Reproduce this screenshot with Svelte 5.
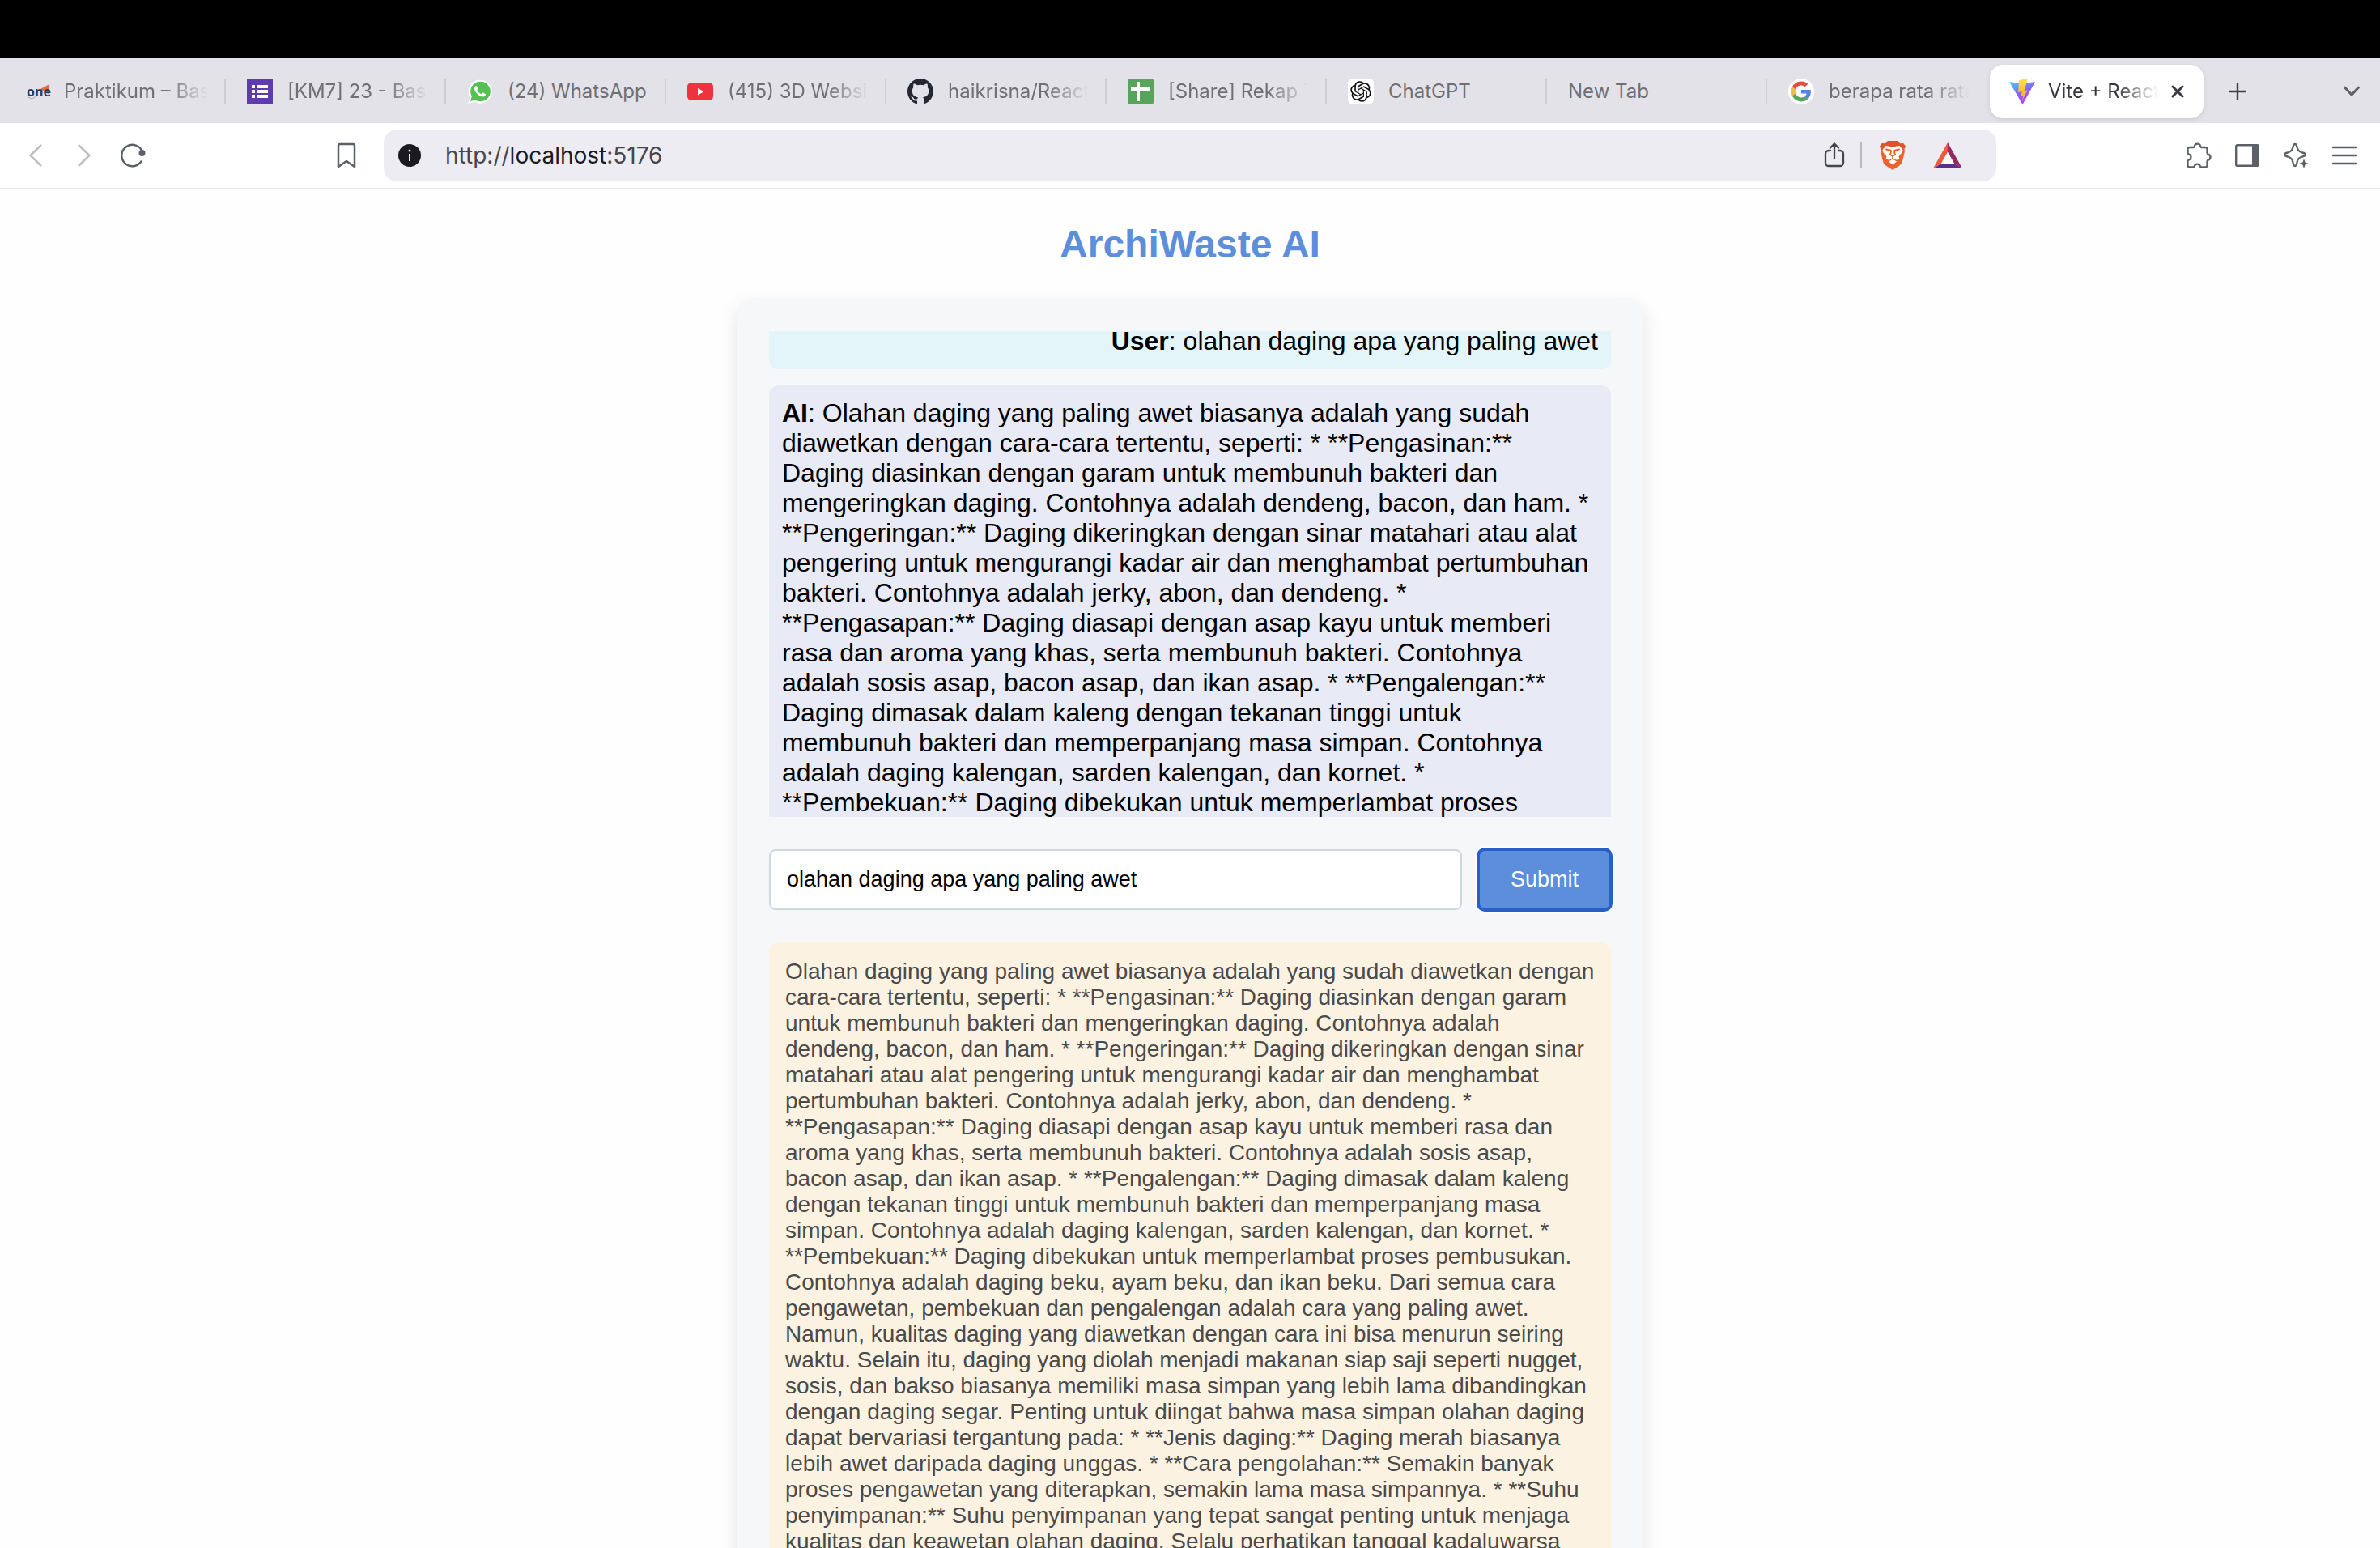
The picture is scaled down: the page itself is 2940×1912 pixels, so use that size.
<script>
  import { onMount } from 'svelte';

  const tabs = [
    { title: 'Praktikum – Basis Data', icon: 'one', long: true },
    { title: '[KM7] 23 - Basis Data', icon: 'forms', long: true },
    { title: '(24) WhatsApp', icon: 'whatsapp' },
    { title: '(415) 3D Website', icon: 'youtube', long: true },
    { title: 'haikrisna/React-App', icon: 'github', long: true },
    { title: '[Share] Rekap Tugas', icon: 'sheets', long: true },
    { title: 'ChatGPT', icon: 'openai' },
    { title: 'New Tab', icon: null },
    { title: 'berapa rata rata', icon: 'google', long: true }
  ];

  const answer =
    'Olahan daging yang paling awet biasanya adalah yang sudah diawetkan dengan cara-cara tertentu, seperti: * **Pengasinan:** Daging diasinkan dengan garam untuk membunuh bakteri dan mengeringkan daging. Contohnya adalah dendeng, bacon, dan ham. * **Pengeringan:** Daging dikeringkan dengan sinar matahari atau alat pengering untuk mengurangi kadar air dan menghambat pertumbuhan bakteri. Contohnya adalah jerky, abon, dan dendeng. * **Pengasapan:** Daging diasapi dengan asap kayu untuk memberi rasa dan aroma yang khas, serta membunuh bakteri. Contohnya adalah sosis asap, bacon asap, dan ikan asap. * **Pengalengan:** Daging dimasak dalam kaleng dengan tekanan tinggi untuk membunuh bakteri dan memperpanjang masa simpan. Contohnya adalah daging kalengan, sarden kalengan, dan kornet. * **Pembekuan:** Daging dibekukan untuk memperlambat proses pembusukan. Contohnya adalah daging beku, ayam beku, dan ikan beku. Dari semua cara pengawetan, pembekuan dan pengalengan adalah cara yang paling awet. Namun, kualitas daging yang diawetkan dengan cara ini bisa menurun seiring waktu. Selain itu, daging yang diolah menjadi makanan siap saji seperti nugget, sosis, dan bakso biasanya memiliki masa simpan yang lebih lama dibandingkan dengan daging segar. Penting untuk diingat bahwa masa simpan olahan daging dapat bervariasi tergantung pada: * **Jenis daging:** Daging merah biasanya lebih awet daripada daging unggas. * **Cara pengolahan:** Semakin banyak proses pengawetan yang diterapkan, semakin lama masa simpannya. * **Suhu penyimpanan:** Suhu penyimpanan yang tepat sangat penting untuk menjaga kualitas dan keawetan olahan daging. Selalu perhatikan tanggal kadaluwarsa';

  let question = $state('olahan daging apa yang paling awet');
  let history;

  onMount(() => {
    history.scrollTop = 22;
  });
</script>

{#snippet favicon(name)}
  {#if name === 'one'}
    <span class="one" aria-hidden="true">
      <svg class="one-mark" viewBox="0 0 28 32"><path d="M28 7v13L17 13z" fill="#e2683f" /><path d="M2 23c4 2.500 7 2 9-1" stroke="#9aa3b5" fill="none" /></svg>
      <b>one</b>
    </span>
  {:else if name === 'forms'}
    <svg class="fav" viewBox="0 0 32 32"><rect width="32" height="32" rx="1" fill="#5f3bb0" /><g fill="#fff"><path d="M6 8h4v4H6zM6 14h4v4H6zM6 20h4v4H6zM12 8h14v4H12zM12 14h14v4H12zM12 20h14v4H12z" /></g></svg>
  {:else if name === 'whatsapp'}
    <svg class="fav" viewBox="0 0 32 32"><path d="M1 31l2.300-8A14.500 14.500 0 1 1 9 28.800z" fill="#fff" /><path d="M4 28l1.800-6A12.300 12.300 0 1 1 10 26.400z" fill="#57c052" /><path d="M11.500 9c-1 0-2.500 1.300-2.500 3.300 0 4.500 6.500 10.200 10.500 10.200 2 0 3.500-1.300 3.600-3.300l-3.800-2-1.800 2c-2.600-1-4.300-2.800-5.300-5l1.400-1.700z" fill="#fff" /></svg>
  {:else if name === 'youtube'}
    <svg class="fav" viewBox="0 0 32 32"><rect y="5" width="32" height="22" rx="5" fill="#ee3340" /><path d="M13 12v8.500l7.500-4.250z" fill="#fff" /></svg>
  {:else if name === 'github'}
    <svg class="fav" viewBox="0 0 16 16"><path fill="#24292f" d="M8 0C3.580 0 0 3.580 0 8c0 3.540 2.290 6.530 5.470 7.590.4.070.55-.17.55-.38 0-.19-.01-.82-.01-1.490-2.010.37-2.530-.49-2.690-.94-.09-.23-.48-.94-.82-1.130-.28-.15-.68-.52-.01-.53.63-.01 1.080.58 1.230.82.72 1.210 1.870.87 2.330.66.07-.52.28-.87.51-1.070-1.780-.2-3.640-.89-3.640-3.950 0-.87.31-1.590.82-2.150-.08-.2-.36-1.020.08-2.120 0 0 .67-.21 2.200.82.64-.18 1.320-.27 2-.27s1.360.09 2 .27c1.530-1.040 2.200-.82 2.200-.82.44 1.100.16 1.920.08 2.120.51.56.82 1.270.82 2.150 0 3.070-1.870 3.750-3.650 3.950.29.25.54.73.54 1.480 0 1.070-.01 1.930-.01 2.200 0 .21.15.46.55.38A8.010 8.010 0 0 0 16 8c0-4.420-3.580-8-8-8z" /></svg>
  {:else if name === 'sheets'}
    <svg class="fav" viewBox="0 0 32 32"><rect width="32" height="32" rx="3" fill="#57a55a" /><path d="M4 11h7V4h4v7h13v4H15v13h-4V15H4z" fill="#fff" /></svg>
  {:else if name === 'openai'}
    <svg class="fav" viewBox="-3 -3 30 30"><rect x="-3" y="-3" width="30" height="30" rx="6" fill="#fff" /><path fill="#111" d="M22.282 9.821a5.985 5.985 0 0 0-.516-4.910 6.046 6.046 0 0 0-6.510-2.900A6.065 6.065 0 0 0 4.981 4.182a5.985 5.985 0 0 0-3.998 2.900 6.046 6.046 0 0 0 .743 7.097 5.980 5.980 0 0 0 .510 4.911 6.051 6.051 0 0 0 6.515 2.900A5.985 5.985 0 0 0 13.260 24a6.056 6.056 0 0 0 5.772-4.206 5.990 5.990 0 0 0 3.998-2.900 6.056 6.056 0 0 0-.747-7.073zM13.260 22.430a4.476 4.476 0 0 1-2.876-1.040l.141-.081 4.779-2.758a.795.795 0 0 0 .393-.681v-6.737l2.020 1.169a.071.071 0 0 1 .038.052v5.583a4.504 4.504 0 0 1-4.495 4.494zM3.600 18.304a4.471 4.471 0 0 1-.535-3.014l.142.085 4.783 2.759a.771.771 0 0 0 .780 0l5.843-3.369v2.332a.080.080 0 0 1-.033.062L9.740 19.950a4.500 4.500 0 0 1-6.140-1.646zM2.340 7.896a4.485 4.485 0 0 1 2.366-1.973V11.600a.766.766 0 0 0 .388.676l5.815 3.355-2.020 1.168a.076.076 0 0 1-.071 0l-4.830-2.786A4.504 4.504 0 0 1 2.340 7.872zm16.597 3.855l-5.833-3.387L15.119 7.200a.076.076 0 0 1 .071 0l4.830 2.791a4.494 4.494 0 0 1-.676 8.105v-5.678a.790.790 0 0 0-.407-.667zm2.010-3.023l-.141-.085-4.774-2.782a.776.776 0 0 0-.785 0L9.409 9.230V6.897a.066.066 0 0 1 .028-.061l4.830-2.787a4.500 4.500 0 0 1 6.680 4.660zm-12.640 4.135l-2.020-1.164a.080.080 0 0 1-.038-.057V6.075a4.500 4.500 0 0 1 7.375-3.453l-.142.080L8.704 5.460a.795.795 0 0 0-.393.681zm1.097-2.365l2.602-1.500 2.607 1.500v2.999l-2.597 1.500-2.607-1.500z" /></svg>
  {:else if name === 'google'}
    <svg class="fav" viewBox="-7 -7 62 62"><circle cx="24" cy="24" r="31" fill="#fff" /><path fill="#dc5143" d="M24 9.500c3.540 0 6.710 1.220 9.210 3.600l6.850-6.850C35.900 2.380 30.470 0 24 0 14.620 0 6.510 5.380 2.560 13.220l7.980 6.190C12.430 13.720 17.740 9.500 24 9.500z" /><path fill="#4f86ec" d="M46.980 24.550c0-1.570-.15-3.090-.38-4.550H24v9.020h12.940c-.58 2.960-2.260 5.480-4.780 7.180l7.730 6c4.510-4.180 7.090-10.360 7.090-17.650z" /><path fill="#f2be42" d="M10.530 28.590a14.500 14.500 0 0 1 0-9.180l-7.980-6.190a24 24 0 0 0 0 21.560l7.980-6.190z" /><path fill="#58a55c" d="M24 48c6.480 0 11.930-2.130 15.890-5.810l-7.730-6c-2.150 1.450-4.920 2.300-8.160 2.300-6.260 0-11.570-4.220-13.470-9.910l-7.980 6.190C6.510 42.620 14.620 48 24 48z" /></svg>
  {/if}
{/snippet}

<div class="window">
  <div class="notch"></div>

  <nav class="tabbar" aria-label="Tabs">
    {#each tabs as tab}
      <button class="tab">
        {@render favicon(tab.icon)}
        <span class="title" class:faded={tab.long}>{tab.title}</span>
      </button>
    {/each}
    <div class="tab active">
      <svg class="fav" viewBox="0 0 32 32">
        <defs>
          <linearGradient id="shield" x1="0" y1="0" x2="0.600" y2="1"><stop offset="0" stop-color="#41d1ff" /><stop offset="0.600" stop-color="#8f5cff" /><stop offset="1" stop-color="#bd34fe" /></linearGradient>
          <linearGradient id="bolt" x1="0.500" y1="0" x2="0.500" y2="1"><stop offset="0" stop-color="#ffe24f" /><stop offset="1" stop-color="#f6a02c" /></linearGradient>
        </defs>
        <path d="M0 4l16 2.500L32 4 16.500 32z" fill="url(#shield)" />
        <path d="M23 0L12 2l-.8 15 4.500-1-1.500 6.500 3-1-1.500 6.500 6.800-13.500-4 .8z" fill="url(#bolt)" />
      </svg>
      <span class="title faded">Vite + React</span>
      <button class="plain" aria-label="Close tab"><svg class="s16" viewBox="0 0 16 16"><path d="M2 2l12 12M14 2L2 14" stroke="#3a3b40" stroke-width="3" stroke-linecap="round" /></svg></button>
    </div>
    <button class="plain new" aria-label="New tab"><svg class="s22" viewBox="0 0 22 22"><path d="M11 1.200v19.600M1.200 11h19.600" stroke="#3f4045" stroke-width="2.400" stroke-linecap="round" /></svg></button>
    <button class="plain more" aria-label="Search tabs"><svg class="s22" viewBox="0 0 22 22"><path d="M2.500 6l8.500 9 8.500-9" fill="none" stroke="#5d6066" stroke-width="3" stroke-linecap="round" /></svg></button>
  </nav>

  <div class="toolbar">
    <div class="nav">
      <button class="plain" aria-label="Back"><svg class="s32" viewBox="0 0 32 32"><path d="M23 3L9.500 16 23 29" fill="none" stroke="#bdbdc0" stroke-width="2.500" /></svg></button>
      <button class="plain" aria-label="Forward"><svg class="s32" viewBox="0 0 32 32"><path d="M9 3l13.500 13L9 29" fill="none" stroke="#bdbdc0" stroke-width="2.500" /></svg></button>
      <button class="plain" aria-label="Reload"><svg class="s32" viewBox="0 0 32 32"><path d="M27 22.500A13.200 13.200 0 1 1 28 12" fill="none" stroke="#5d6066" stroke-width="2.500" /><circle cx="27.500" cy="13" r="4" fill="#5d6066" /></svg></button>
    </div>
    <button class="plain" aria-label="Bookmark this page"><svg class="s32" viewBox="0 0 32 32"><path d="M6 4a2 2 0 0 1 2-2h16a2 2 0 0 1 2 2v26l-10-7-10 7z" fill="none" stroke="#5d6066" stroke-width="2.500" stroke-linejoin="round" /></svg></button>
    <div class="address">
      <svg class="s28" viewBox="0 0 28 28"><circle cx="14" cy="14" r="14" fill="#1b1b1f" /><circle cx="14" cy="8" r="1.500" fill="#fff" /><path d="M14 12v9" stroke="#fff" stroke-width="2" /></svg>
      <a class="url" href="http://localhost:5176">http://<span>localhost</span>:5176</a>
      <button class="plain share" aria-label="Share"><svg class="s32" viewBox="0 0 32 32"><path d="M11 10H9a4 4 0 0 0-4 4v11a4 4 0 0 0 4 4h14a4 4 0 0 0 4-4V14a4 4 0 0 0-4-4h-2M16 20V2M11 6.500l5-5 5 5" fill="none" stroke="#46474d" stroke-width="2.300" stroke-linecap="round" /></svg></button>
      <span class="rule"></span>
      <button class="plain brave" aria-label="Brave Shields">
        <svg viewBox="0 0 32 36"><path d="M10 0h12l3 3.500 4-.5 3 4-1.500 3 .5 3-3.500 14-3 3.500L16 36l-8.500-5.500-3-3.500L1 13l.5-3L0 7l3-4 4 .5z" fill="#ec622c" /><path d="M10 0h12l3 3.500 4-.5 3 4-1 2-5-2-10 1-10-1-5 2-1-2 3-4 4 .5z" fill="#de5426" /><path d="M11 6.500l5 1 5-1 3.500-.5 4 5.500-1 3-4 4.500.8 3-3.300 1.800-5-2.800-5 2.800L7.700 22l.8-3-4-4.500-1-3L7.500 6z" fill="#fff" /><path d="M8 10.500l5.500 1.200M24 10.500l-5.500 1.200M13.500 11.700l.5 2.300-1.200 3L16 19l3.200-2-1.200-3 .5-2.300" fill="none" stroke="#ec622c" stroke-width="1.800" stroke-linecap="round" /><path d="M16 19v3" stroke="#ec622c" stroke-width="1.600" /><path d="M16 22.500l5 3-5 4-5-4z" fill="#fff" /></svg>
      </button>
      <button class="plain bat" aria-label="Brave Rewards">
        <svg viewBox="0 0 36 32"><path d="M18 0L0 32l10-6 8-14z" fill="#f05a3a" /><path d="M18 0l18 32-10-6-8-14z" fill="#932a60" /><path d="M0 32h36l-10-6H10z" fill="#5f2e86" /><path d="M18 12l8 14H10z" fill="#fff" /></svg>
      </button>
    </div>
    <div class="tools">
      <button class="plain" aria-label="Extensions"><svg class="s32" viewBox="0 0 32 32"><path d="M4.500 6h5c1 0 1-.5 1.300-1.500a3.800 3.800 0 0 1 7.400 0c.3 1 .3 1.500 1.300 1.500h4.500A2.500 2.500 0 0 1 26.500 8.500v4.500c0 1 .5 1.200 1.500 1.600a3.700 3.700 0 0 1 0 7c-1 .4-1.500.6-1.500 1.600v5a2.300 2.300 0 0 1-2.300 2.300H19c-1 0-1-.6-1.200-1.500a3.800 3.800 0 0 0-7 0c-.3.9-.3 1.500-1.300 1.500H5A2.300 2.300 0 0 1 2.500 28.200V23c0-1 .6-1.200 1.500-1.500a3.700 3.700 0 0 0 0-7c-.9-.3-1.500-.5-1.500-1.500V8a2 2 0 0 1 2-2z" fill="none" stroke="#5d6066" stroke-width="2.300" stroke-linejoin="round" /></svg></button>
      <button class="plain" aria-label="Sidebar"><svg class="s32" viewBox="0 0 32 32"><rect x="2.200" y="3.200" width="27.600" height="25.600" rx="1.500" fill="none" stroke="#5d6066" stroke-width="2.400" /><path d="M22 3h8v26h-8z" fill="#5d6066" /></svg></button>
      <button class="plain" aria-label="Leo AI"><svg class="s32" viewBox="0 0 32 32"><path d="M15 2c1.500 0 2 1 2.600 4 1 4 2.400 5.500 6.400 6.500 3 .6 4 1.300 4 2.500s-1 1.900-4 2.500c-4 1-5.400 2.500-6.400 6.500-.6 4-1.100 5-2.600 5s-2-1-2.600-5C11.400 20 10 18.500 6 17.500c-3-.6-4-1.300-4-2.500s1-1.900 4-2.500c4-1 5.400-2.500 6.400-6.500C13 3 13.500 2 15 2z" fill="none" stroke="#5d6066" stroke-width="2.300" /><path d="M26 20l1.600 4.400L32 26l-4.400 1.600L26 32l-1.600-4.400L20 26l4.400-1.600z" fill="#5d6066" /></svg></button>
      <button class="plain" aria-label="Menu"><svg class="s32" viewBox="0 0 32 32"><path d="M2 6h28M2 16h28M2 26h28" stroke="#5d6066" stroke-width="2.500" stroke-linecap="round" /></svg></button>
    </div>
  </div>

  <main>
    <h1>ArchiWaste AI</h1>
    <section class="card">
      <div class="history" bind:this={history}>
        <p class="message user"><strong>User</strong>: olahan daging apa yang paling awet</p>
        <p class="message ai"><strong>AI</strong>: {answer}</p>
      </div>
      <form onsubmit={(e) => e.preventDefault()}>
        <input type="text" aria-label="Question" bind:value={question} />
        <button class="submit" type="submit">Submit</button>
      </form>
      <p class="response">{answer}</p>
    </section>
  </main>
</div>

<style>
  :global(body) {
    margin: 0;
    background: #fff;
  }
  .window {
    display: flex;
    flex-direction: column;
    height: 100vh;
    overflow: hidden;
    background: #fefefe;
    font-family: 'Liberation Sans', Arial, sans-serif;
  }
  .notch {
    flex: none;
    height: 72px;
    background: #000;
  }
  svg {
    display: block;
    flex: none;
  }
  .fav, .s32 {
    width: 32px;
    height: 32px;
  }
  .s28 {
    width: 28px;
    height: 28px;
  }
  .s22 {
    width: 22px;
    height: 22px;
  }
  .s16 {
    width: 16px;
    height: 16px;
  }
  .plain {
    flex: none;
    padding: 0;
    border: 0;
    background: none;
  }

  .tabbar {
    flex: none;
    display: flex;
    align-items: center;
    box-sizing: border-box;
    height: 80px;
    padding: 2px 24px 0 7px;
    background: #e3e2e8;
    font-family: Inter, sans-serif;
  }
  .tab {
    flex: 0 1 272px;
    display: flex;
    align-items: center;
    gap: 18px;
    box-sizing: border-box;
    min-width: 0;
    height: 32px;
    padding: 0 20px 0 26px;
    border: 0;
    border-right: 2px solid #cdccd2;
    background: none;
    color: #6f6f74;
    font-family: inherit;
    font-size: 24px;
    line-height: 32px;
    text-align: left;
  }
  .tab:nth-of-type(9) {
    border-color: transparent;
  }
  .title {
    flex: 1;
    min-width: 0;
    overflow: hidden;
    white-space: nowrap;
  }
  .faded {
    mask-image: linear-gradient(to right, #000 calc(100% - 52px), transparent);
  }
  .active {
    flex-basis: 264px;
    gap: 16px;
    height: 66px;
    margin: 0 3px;
    padding: 0 24px;
    border: 0;
    border-radius: 16px;
    background: #fff;
    box-shadow: 0 2px 6px rgba(0, 0, 0, 0.1);
    color: #36373c;
  }
  .new {
    margin-left: 28px;
  }
  .more {
    margin-left: auto;
  }
  .one {
    position: relative;
    flex: none;
    width: 28px;
    color: #263a68;
    font-family: 'Open Sans', sans-serif;
    font-size: 16px;
  }
  .one-mark {
    position: absolute;
    inset: 0;
    width: 28px;
    height: 32px;
  }
  .one b {
    position: relative;
  }

  .toolbar {
    flex: none;
    display: flex;
    align-items: center;
    box-sizing: border-box;
    height: 82px;
    padding: 0 28px;
    border-bottom: 2px solid #e3e2e8;
    background: #fff;
  }
  .nav {
    display: flex;
    gap: 28px;
    margin-right: 232px;
  }
  .address {
    flex: 0 1 1992px;
    display: flex;
    align-items: center;
    box-sizing: border-box;
    min-width: 0;
    height: 64px;
    margin-left: 30px;
    padding: 0 42px 0 18px;
    border-radius: 16px;
    background: #edecf2;
  }
  .url {
    flex: 1;
    margin-left: 30px;
    color: #46474c;
    font-family: Inter, sans-serif;
    font-size: 28px;
    text-decoration: none;
  }
  .url span {
    color: #1b1b1f;
  }
  .rule {
    width: 2px;
    height: 32px;
    margin: 0 22px 0 16px;
    background: #b9b9be;
  }
  .brave {
    width: 32px;
    margin-right: 34px;
  }
  .bat {
    width: 36px;
  }
  .tools {
    display: flex;
    gap: 28px;
    margin-left: auto;
  }

  main {
    flex: 1;
    min-height: 0;
    overflow: hidden;
    padding-top: 40px;
  }
  h1 {
    margin: 0 0 40px;
    color: #5c8edc;
    font-size: 48px;
    line-height: 55px;
    text-align: center;
  }
  .card {
    box-sizing: border-box;
    max-width: 1120px;
    margin: 0 auto;
    padding: 40px;
    border-radius: 20px;
    background: #f5f7f9;
    box-shadow: 0 8px 24px rgba(0, 0, 0, 0.1);
  }
  .history {
    height: 600px;
    margin-bottom: 40px;
    overflow-y: auto;
    scrollbar-width: none;
  }
  .message {
    margin: 0 0 20px;
    padding: 16px;
    border-radius: 12px;
    color: #000;
    font-size: 32px;
    line-height: 37px;
  }
  .user {
    background: #e3f5f9;
    text-align: right;
  }
  .ai {
    background: #e8eaf5;
  }
  form {
    display: flex;
    gap: 20px;
    margin-bottom: 40px;
  }
  input,
  .submit {
    box-sizing: border-box;
    height: 75px;
    border-radius: 8px;
    font-family: inherit;
    font-size: 27px;
  }
  input {
    flex: 1;
    min-width: 0;
    padding: 20px;
    border: 2px solid #cfd8dc;
    background: #fff;
    color: #000;
  }
  .submit {
    padding: 0 40px;
    border: 0;
    outline: 4px solid #285ec8;
    outline-offset: -2px;
    background: #5c8edc;
    box-shadow: 0 0 0 4px #fff;
    color: #fff;
  }
  .response {
    margin: 0;
    padding: 20px;
    border-radius: 12px;
    background: #fcf2e2;
    color: #4a4a4a;
    font-size: 28px;
    line-height: 32px;
  }
</style>
